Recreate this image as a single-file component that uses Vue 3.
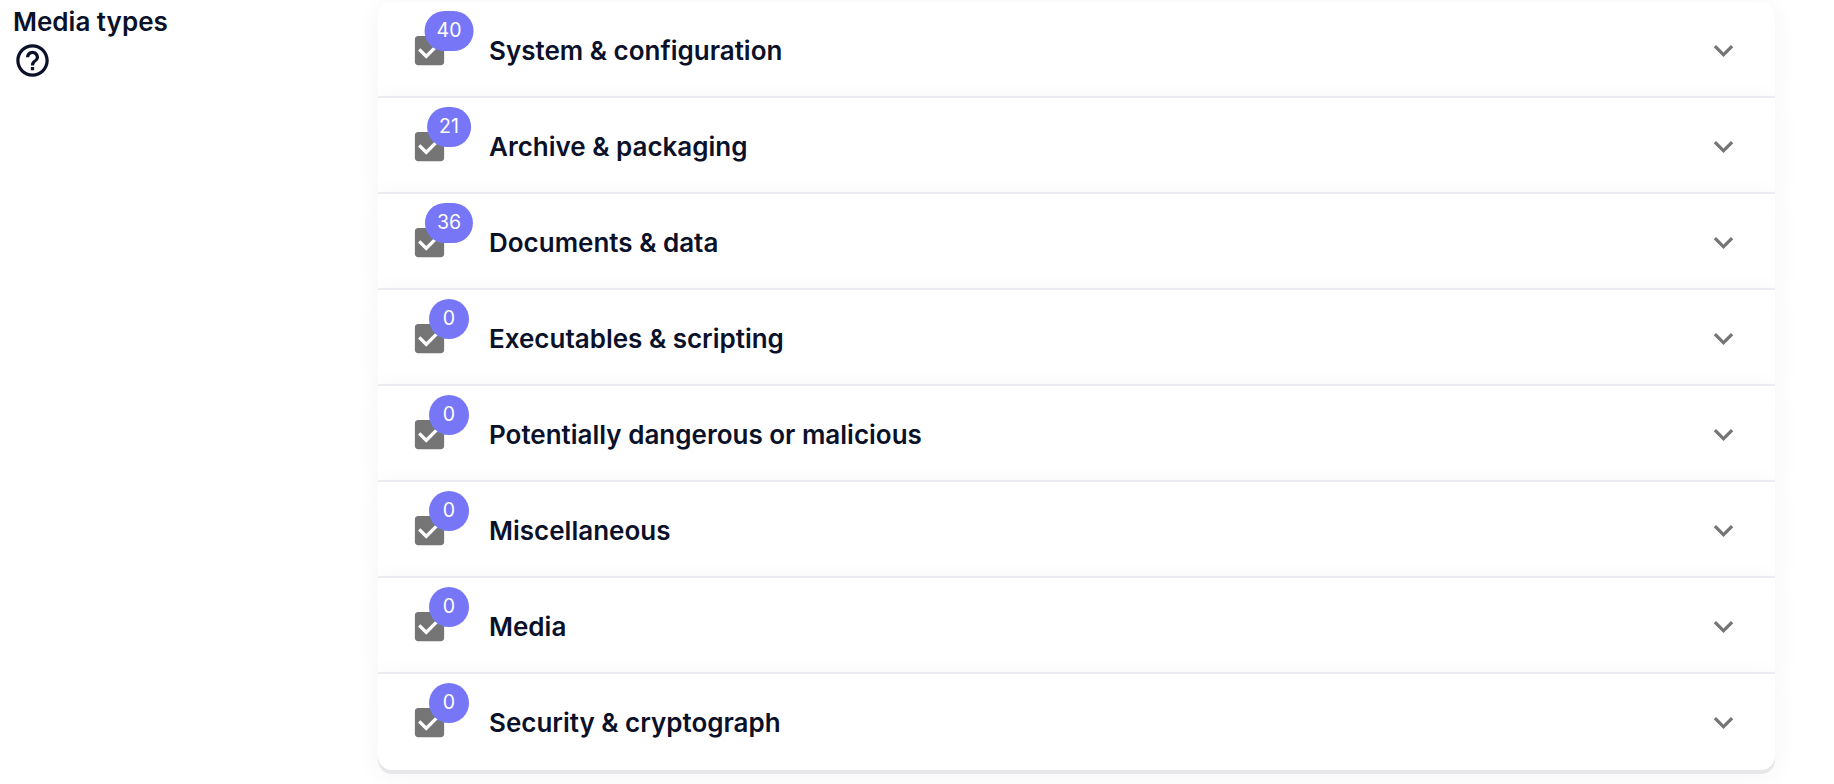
<script setup>
const groups = [
  { title: 'System & configuration', count: 40 },
  { title: 'Archive & packaging', count: 21 },
  { title: 'Documents & data', count: 36 },
  { title: 'Executables & scripting', count: 0 },
  { title: 'Potentially dangerous or malicious', count: 0 },
  { title: 'Miscellaneous', count: 0 },
  { title: 'Media', count: 0 },
  { title: 'Security & cryptograph', count: 0 },
]
</script>

<template>
  <main class="page">
    <aside class="side">
      <h2 class="label">Media types</h2>
      <svg class="help" viewBox="0 0 24 24" aria-hidden="true">
        <path d="M11 18h2v-2h-2v2zm1-16C6.48 2 2 6.48 2 12s4.48 10 10 10 10-4.480 10-10S17.520 2 12 2zm0 18c-4.410 0-8-3.590-8-8s3.590-8 8-8 8 3.590 8 8-3.590 8-8 8zm0-14c-2.210 0-4 1.790-4 4h2c0-1.100.9-2 2-2s2 .9 2 2c0 2-3 1.750-3 5h2c0-2.250 3-2.500 3-5 0-2.210-1.790-4-4-4z" />
      </svg>
    </aside>
    <section class="list">
      <div v-for="g in groups" :key="g.title" class="row">
        <span class="check">
          <svg class="box" viewBox="0 0 24 24" aria-hidden="true">
            <path d="M19 3H5c-1.110 0-2 .9-2 2v14c0 1.100.89 2 2 2h14c1.110 0 2-.9 2-2V5c0-1.100-.89-2-2-2zm-9 14l-5-5 1.410-1.410L10 14.170l7.590-7.590L19 8l-9 9z" />
          </svg>
          <span class="badge">{{ g.count }}</span>
        </span>
        <span class="title">{{ g.title }}</span>
        <svg class="chevron" viewBox="0 0 24 24" aria-hidden="true">
          <path d="M16.590 8.590L12 13.170 7.410 8.590 6 10l6 6 6-6z" />
        </svg>
      </div>
    </section>
  </main>
</template>

<style>
body {
  background: #fff;
}
</style>

<style scoped>
.page {
  display: flex;
  width: 1834px;
  height: 784px;
  overflow: hidden;
  box-sizing: border-box;
  padding-top: 2px;
  font-family: Inter, "Liberation Sans", sans-serif;
  color: #0a1128;
}
.side {
  flex: 0 0 378px;
  box-sizing: border-box;
  padding-left: 13px;
}
.label {
  margin: 0;
  font-size: 26px;
  font-weight: 600;
  line-height: 39px;
}
.help {
  display: block;
  width: 39px;
  height: 39px;
  fill: currentColor;
}
.list {
  width: 1397px;
  display: flex;
  flex-direction: column;
}
.row {
  --edge: 0 4px 0 #e7e7e9;
  --halo: 0 4px 26px rgba(0, 0, 0, 0.05);
  display: flex;
  align-items: center;
  box-sizing: border-box;
  height: 96px;
  padding: 0 32px;
  background: #fff;
  box-shadow: inset 0 -2px 0 #eeeef4, var(--halo);
}
.row:first-child {
  border-radius: 14px 14px 0 0;
}
.row:last-child {
  border-radius: 0 0 14px 14px;
  box-shadow: var(--edge), var(--halo);
}
.check {
  position: relative;
  width: 39px;
  height: 39px;
  margin-right: 40px;
}
.box {
  display: block;
  width: 39px;
  height: 39px;
  fill: #757575;
}
.badge {
  position: absolute;
  left: 39px;
  top: 0;
  transform: translate(-50%, -50%);
  box-sizing: border-box;
  min-width: 40px;
  height: 40px;
  padding: 0 12px;
  border-radius: 20px;
  background: #7676f7;
  color: #fff;
  font-size: 19.5px;
  line-height: 39px;
  text-align: center;
}
.title {
  flex: 1;
  font-size: 26px;
  font-weight: 600;
}
.chevron {
  width: 39px;
  height: 39px;
  margin-top: 1px;
  fill: #757575;
}
</style>
